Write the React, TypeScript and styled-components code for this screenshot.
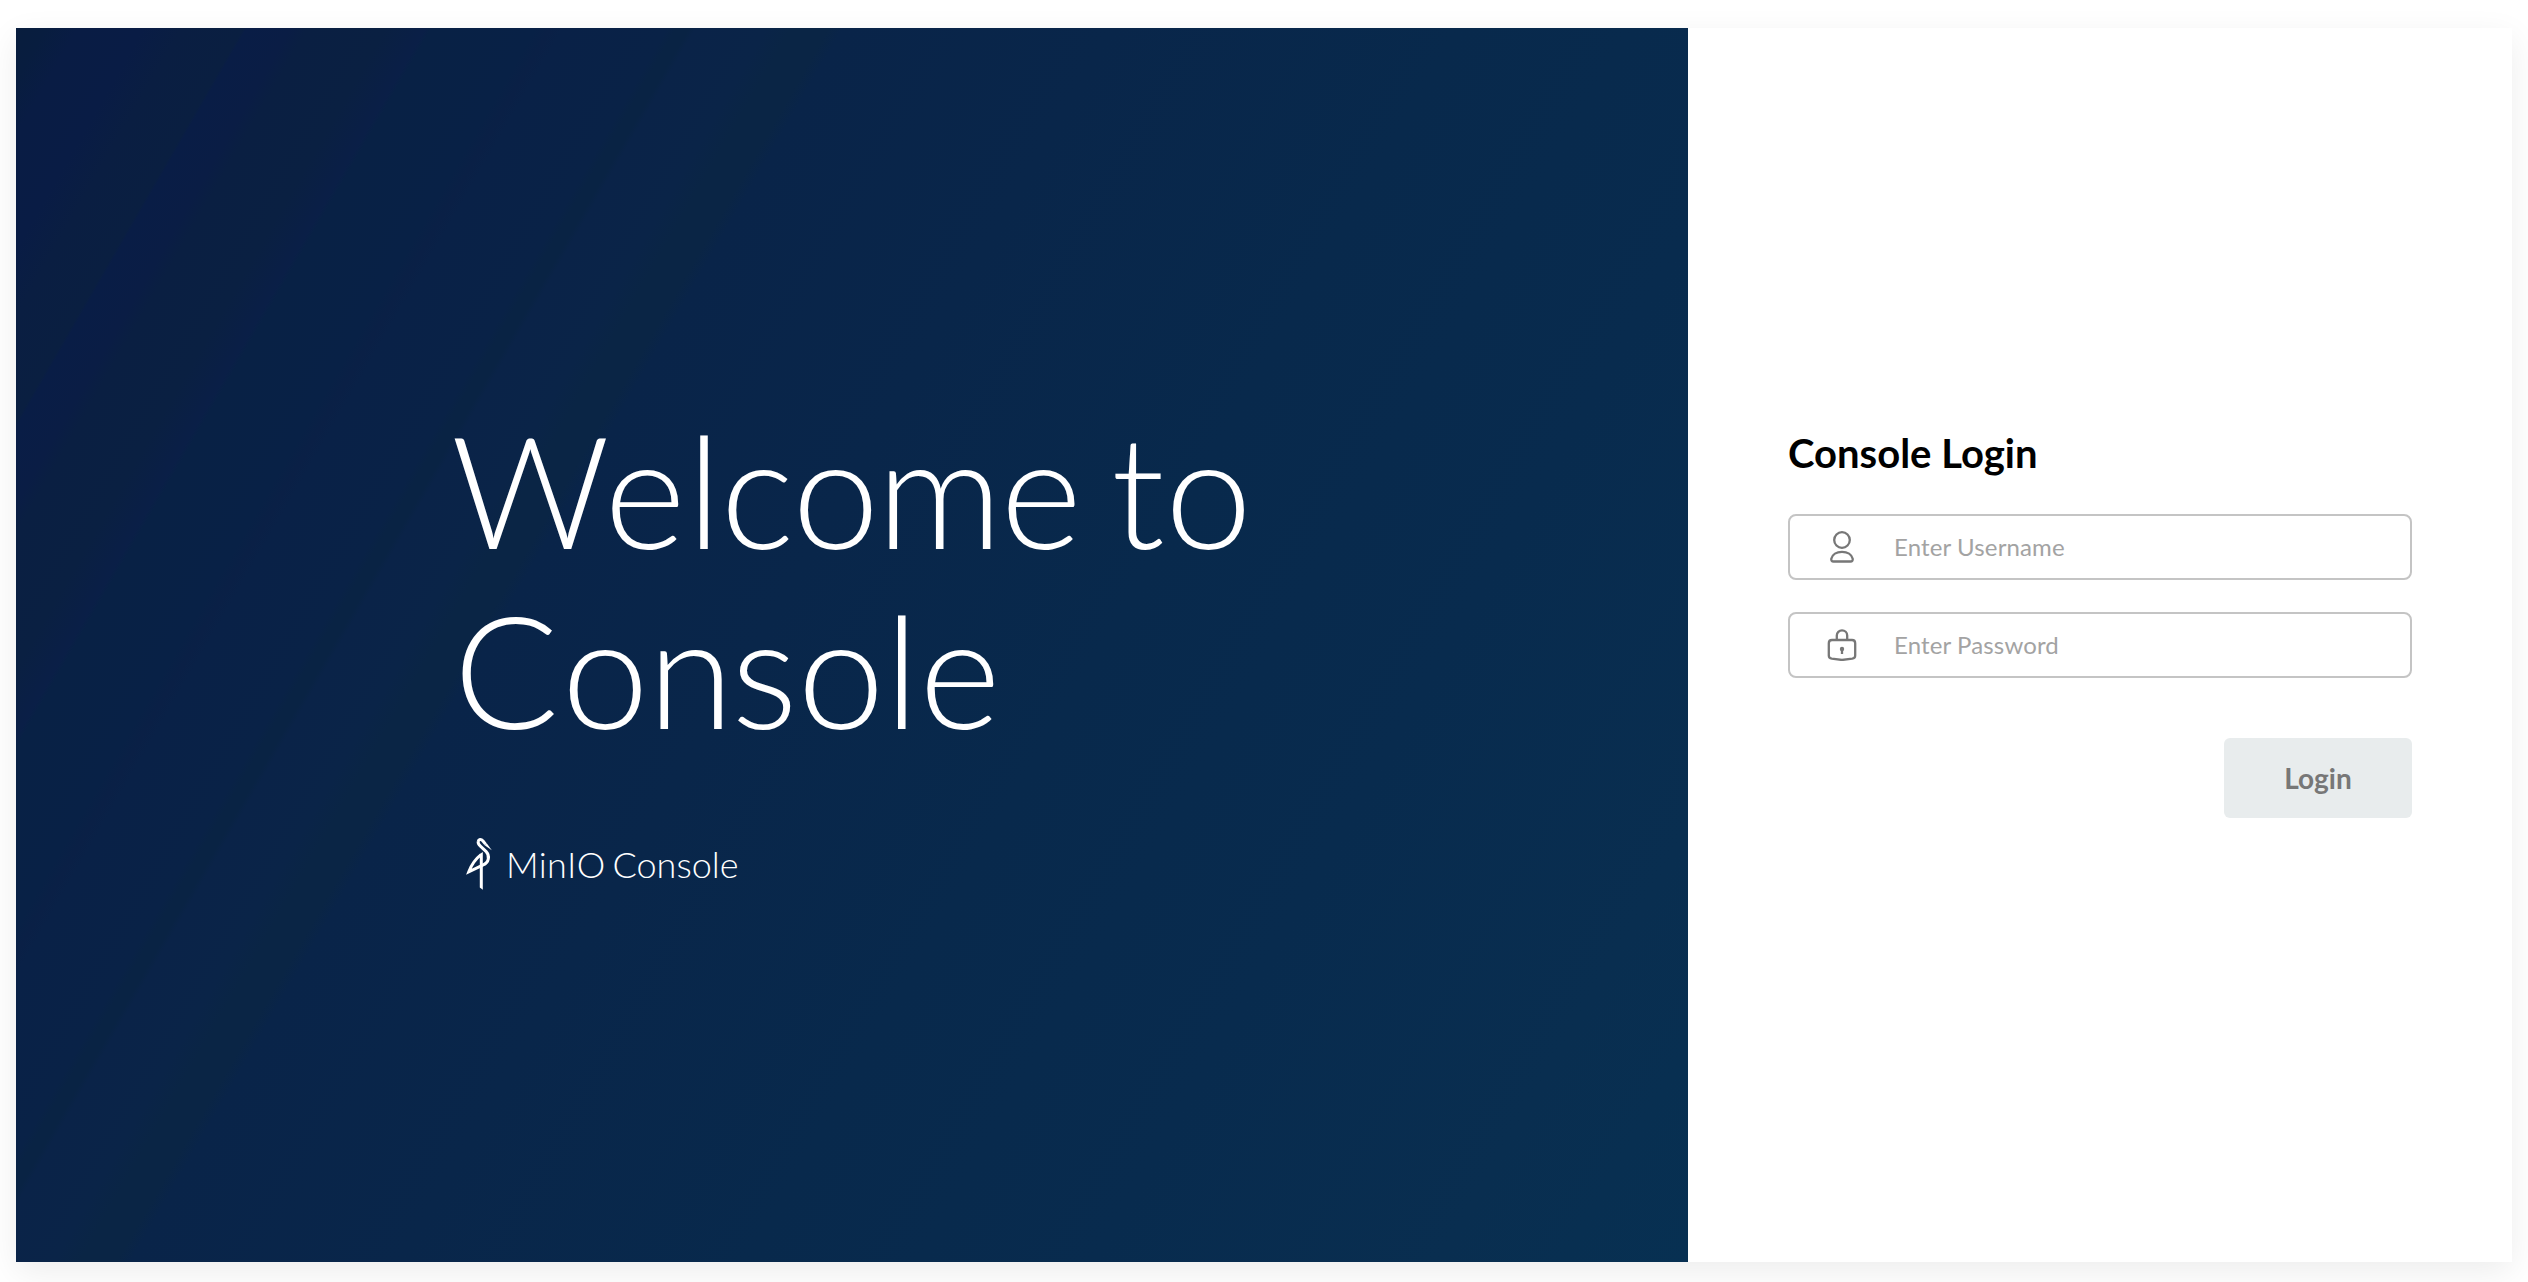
import React from "react";
import styled, { createGlobalStyle } from "styled-components";

const GlobalStyle = createGlobalStyle`
  *, *::before, *::after { box-sizing: border-box; }
  body { margin: 0; background: #fff; font-family: Lato, sans-serif; }
`;

const Page = styled.main`
  height: 1282px;
  padding: 28px 16px 20px;
  overflow: hidden;
`;

const Card = styled.div`
  display: grid;
  grid-template-columns: 1672px 1fr;
  height: 1234px;
  background: #fff;
  box-shadow: 0 10px 32px rgba(0, 0, 0, 0.075);
`;

const Promo = styled.section`
  padding: 371px 0 0 435px;
  color: #fff;
  background: linear-gradient(
    120deg,
    #081d3d 0, #081d3f 26px, #091c44 54px, #091c45 110px,
    #0a1e42 144px, #0a1f41 197px, #091d46 200px, #0a1d45 238px,
    #0a1f42 253px, #0a2042 320px, #0a1f46 348px, #0a1f47 355px,
    #082145 360px, #082146 450px, #0a2046 463px, #092147 474px,
    #092247 564px, #092344 572px, #092344 583px, #0a2348 589px,
    #0a2448 650px, #0a2545 672px, #0a2545 704px, #092449 716px,
    #09264a 950px, #08294c 1250px, #082b4e 1550px, #092e50 1850px,
    #073052 100%
  );
`;

const Welcome = styled.h1`
  width: 900px;
  margin: 0;
  font-size: 156px;
  font-weight: 300;
  line-height: 180px;
  white-space: nowrap;
`;

const Line = styled.span<{ $indent?: number }>`
  display: block;
  padding-left: ${({ $indent = 0 }) => $indent}px;
`;

const Kern = styled.span<{ $gap: number }>`
  letter-spacing: ${({ $gap }) => $gap}px;
`;

const Product = styled.div`
  display: flex;
  align-items: center;
  height: 54px;
  margin-top: 78px;
  padding-left: 14px;
  font-size: 36px;
  font-weight: 300;
`;

const ProductName = styled.span`
  word-spacing: -2.4px;
`;

const Crane = styled.svg`
  width: 28px;
  height: 54px;
  margin-right: 13px;
`;

const FormSide = styled.section`
  padding: 400px 100px 0;
`;

const Title = styled.h2`
  margin: 0 0 36px;
  font-size: 40px;
  font-weight: 700;
  line-height: 50px;
  color: #000;
`;

const Field = styled.label`
  display: flex;
  align-items: center;
  height: 66px;
  margin-bottom: 32px;
  border: 2px solid #c4c4c4;
  border-radius: 8px;
  color: #777;
`;

const FieldIcon = styled.svg`
  width: 32px;
  height: 32px;
  margin: 0 36px;
  fill: none;
  stroke: currentColor;
  stroke-width: 2.3;
  stroke-linejoin: round;
`;

const Input = styled.input`
  flex: 1;
  min-width: 0;
  padding: 0 0 2px;
  border: 0;
  outline: 0;
  background: transparent;
  font: 400 24px Lato, sans-serif;
  letter-spacing: 0.13px;
  &::placeholder { color: #a3a3a3; opacity: 1; }
`;

const Actions = styled.div`
  display: flex;
  justify-content: flex-end;
  padding-top: 28px;
`;

const LoginButton = styled.button`
  width: 188px;
  height: 80px;
  padding: 0;
  border: 0;
  border-radius: 6px;
  background: #e8eced;
  color: #777;
  font: 700 28px Lato, sans-serif;
`;

export default function App() {
  return (
    <>
      <GlobalStyle />
      <Page>
        <Card>
          <Promo>
            <Welcome>
              <Line><Kern $gap={-5.3}>W</Kern><Kern $gap={1}>e</Kern><Kern $gap={-0.6}>l</Kern><Kern $gap={-2}>c</Kern><Kern $gap={-2.4}>o</Kern><Kern $gap={-2}>m</Kern>e<Kern $gap={-13}> </Kern><Kern $gap={0.5}>t</Kern>o</Line>
              <Line $indent={2.5}><Kern $gap={2.8}>C</Kern><Kern $gap={-1.2}>o</Kern><Kern $gap={-2.2}>n</Kern>so<Kern $gap={0.2}>l</Kern>e</Line>
            </Welcome>
            <Product>
              <Crane viewBox="0 0 28 54" fill="none" stroke="#fff" aria-hidden="true">
                <path d="M20.5 7.2 18 4C16 1.6 13.6 2.1 13.2 4.6C12.8 6.4 14 7.8 15.4 9.1L21.2 14.6C25 18.5 24 25.6 18.2 27.8L3.8 34.8C6.3 28 10 22.3 16 17.6" strokeWidth="3" />
                <path d="M21.7 6.2 26.8 13.2 19.3 8.1Z" fill="#fff" stroke="none" />
                <path d="M14.8 17 17.8 15V52.8L14.8 50.6Z" fill="#fff" stroke="none" />
              </Crane>
              <ProductName><Kern $gap={0.35}>MinI</Kern>O Console</ProductName>
            </Product>
          </Promo>
          <FormSide>
            <Title>Console Login</Title>
            <Field>
              <FieldIcon viewBox="0 0 32 32">
                <circle cx="16" cy="9" r="7.8" />
                <path d="M7.5 30.5C5.8 30.5 5 29.4 5.3 27.8C6.2 23.4 10.6 20.8 16 20.8S25.8 23.4 26.7 27.8C27 29.4 26.2 30.5 24.5 30.5Z" />
              </FieldIcon>
              <Input placeholder="Enter Username" />
            </Field>
            <Field>
              <FieldIcon viewBox="0 0 32 32">
                <path d="M10.8 11V6.5a5.2 5.2 0 0 1 10.4 0V11M6 11H26Q29.2 11 29.2 14.2V26.5Q29.2 29.2 26.2 29.7L16 31 5.8 29.7Q2.8 29.2 2.8 26.5V14.2Q2.8 11 6 11Z" />
                <path d="M16 19V25" />
                <circle cx="16" cy="20" r="2.2" fill="currentColor" stroke="none" />
              </FieldIcon>
              <Input type="password" placeholder="Enter Password" />
            </Field>
            <Actions><LoginButton type="button">Login</LoginButton></Actions>
          </FormSide>
        </Card>
      </Page>
    </>
  );
}
